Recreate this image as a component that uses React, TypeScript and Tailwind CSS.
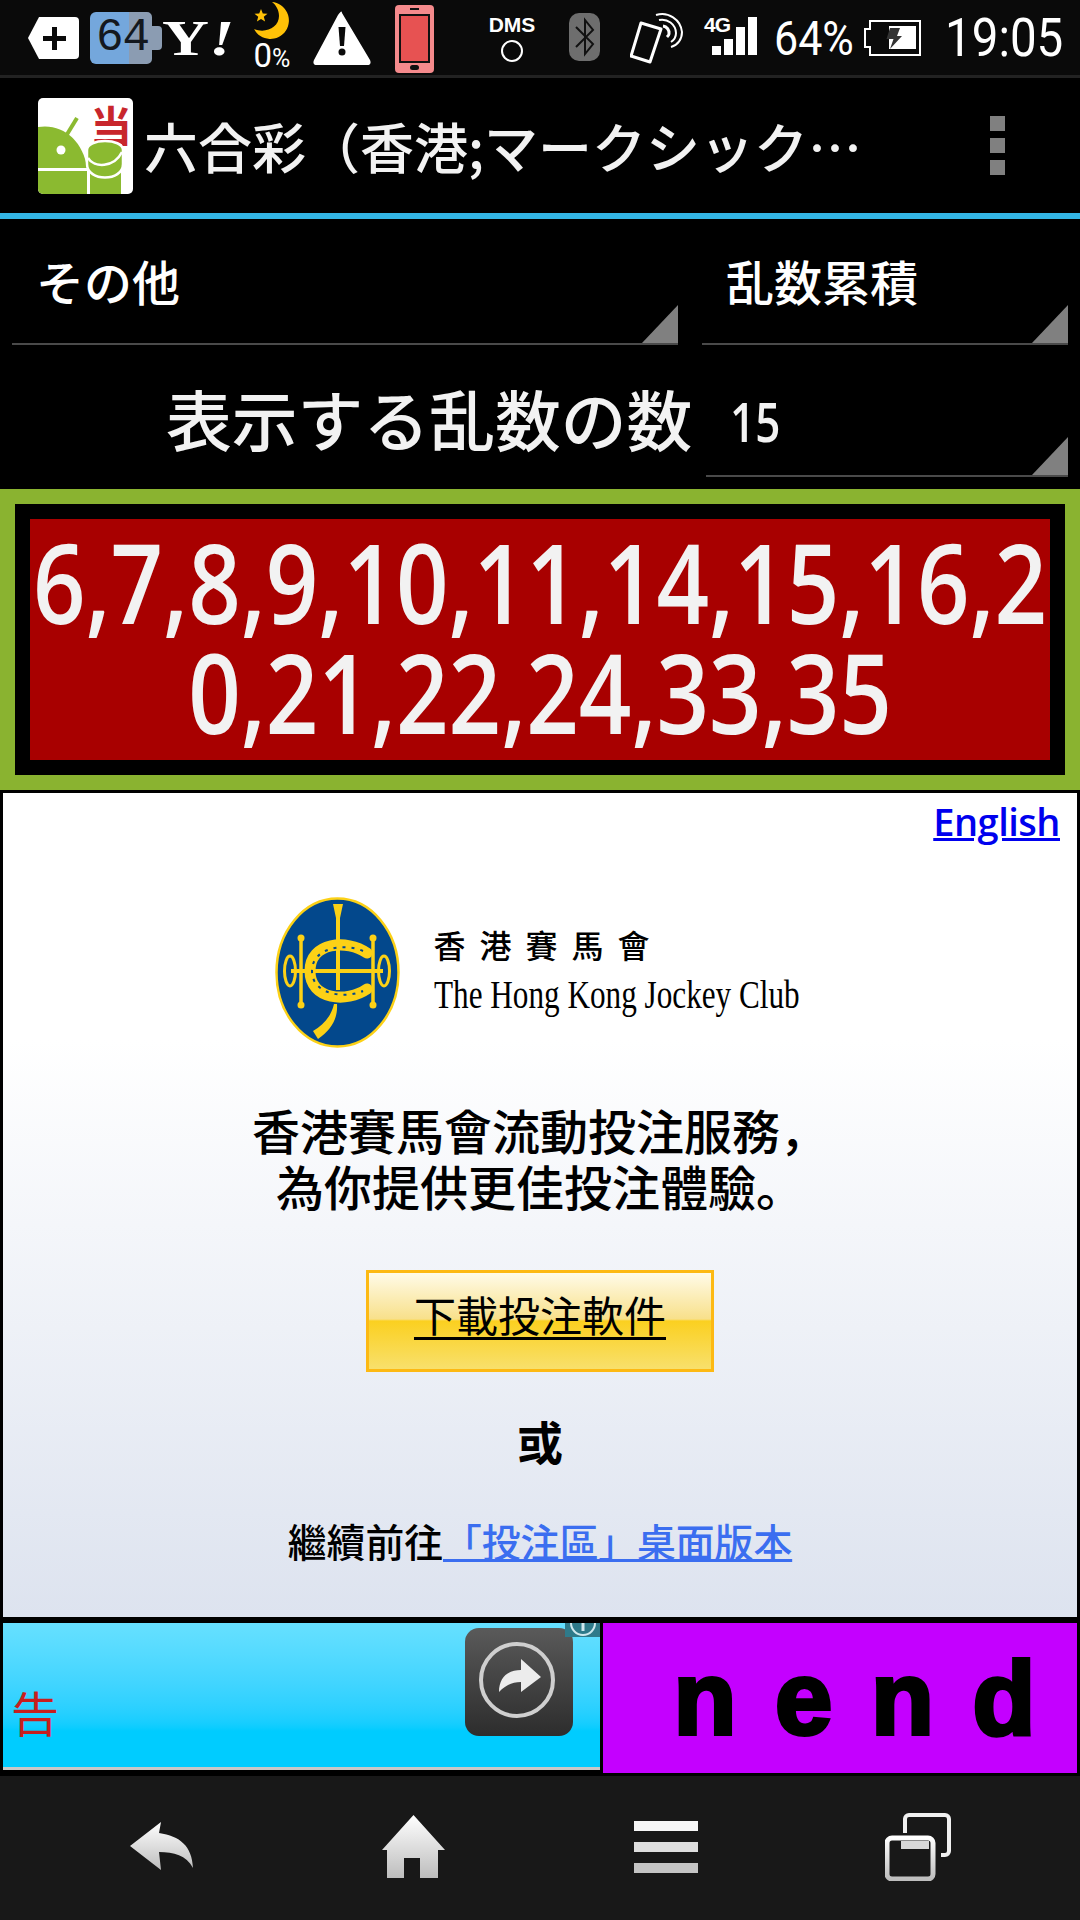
import { ReactNode } from "react";

const JP = "font-['Noto_Sans_CJK_JP','Noto_Sans_CJK_TC',sans-serif]";

//status bar icons
const TagIcon = () => (
  <svg width="51" height="42" viewBox="0 0 51 42" className="ml-[28px]">
    <path d="M11 0H47a4 4 0 0 1 4 4V38a4 4 0 0 1-4 4H11L0 21Z" fill="#fff" />
    <path d="M24 10h5v9h9v5h-9v9h-5v-9h-9v-5h9Z" fill="#0a0a0a" />
  </svg>
);

const BatteryWidget = () => (
  <div className="relative ml-[11px] h-[52px] w-[72px]">
    <svg width="72" height="52" viewBox="0 0 72 52">
      <path d="M6 0H39V52H6a6 6 0 0 1-6-6V6a6 6 0 0 1 6-6Z" fill="#74a7dc" />
      <path d="M39 0H57a5 5 0 0 1 5 5V14H68a4 4 0 0 1 4 4V34a4 4 0 0 1-4 4H62V47a5 5 0 0 1-5 5H39Z" fill="#8b9cb2" />
    </svg>
    <span className="absolute top-[-2px] left-[6px] font-['Liberation_Mono',monospace] text-[46px] leading-[56px] tracking-[-1px] text-[#14181e]">
      64
    </span>
  </div>
);

const Moon = () => (
  <div className="ml-[21px] flex h-[75px] w-[40px] flex-col items-center">
    <svg width="38" height="40" viewBox="0 0 36 38" className="mt-[2px]">
      <path d="M18 0a18.500 18.500 0 1 1-18 27c12 5 25-2 25-13 0-6-3-11-7-14Z" fill="#ffc107" />
      <path d="M7 7l1.800 4.500 4.700.3-3.700 3 1.300 4.700-4.100-2.600-4.100 2.600 1.300-4.700-3.700-3 4.700-.3Z" fill="#ffc107" />
    </svg>
    <span className="mt-[0px] font-['Roboto',sans-serif] text-[33px] leading-[32px] whitespace-nowrap text-white">
      0<span className="text-[25px]">%</span>
    </span>
  </div>
);

const Warning = () => (
  <svg width="60" height="56" viewBox="0 0 60 56" className="ml-[20px]">
    <path d="M30 3 L58 50 Q60 55 55 55 H5 Q0 55 2 50 L26 5 Q30 -1 30 3Z" fill="#fff" />
    <path d="M26.500 17h7l-1.500 19h-4Z" fill="#0a0a0a" />
    <circle cx="30" cy="42" r="3.500" fill="#0a0a0a" />
  </svg>
);

const PhoneRed = () => (
  <svg width="39" height="68" viewBox="0 0 39 68" className="ml-[23px] mt-[3px]">
    <rect width="39" height="68" rx="4" fill="#f58a8c" />
    <rect x="5" y="10" width="29" height="47" fill="#e75252" stroke="#111" strokeWidth="2" />
    <rect x="15" y="3" width="9" height="2" fill="#111" />
    <rect x="15" y="60" width="9" height="5" rx="2.500" fill="#111" />
  </svg>
);

const Dms = () => (
  <div className="ml-[54px] flex w-[48px] flex-col items-center">
    <span className="font-['Liberation_Sans',sans-serif] text-[21px] leading-[24px] font-bold text-white">DMS</span>
    <svg width="24" height="24" viewBox="0 0 24 24" className="mt-[2px]">
      <circle cx="12" cy="12" r="10" fill="none" stroke="#fff" strokeWidth="2" />
    </svg>
  </div>
);

const Bluetooth = () => (
  <svg width="31" height="48" viewBox="0 0 31 48" className="ml-[33px] mt-[-2px]">
    <rect width="31" height="48" rx="10" fill="#6e6e6e" />
    <path d="M7 14 L24 31 L16 41 V7 L24 17 L7 34" fill="none" stroke="#111" strokeWidth="2" />
  </svg>
);

const NfcPhone = () => (
  <svg width="53" height="52" viewBox="0 0 53 52" className="ml-[30px] mt-[1px]">
    <path d="M11 11 L31 17 L20 50 L1 44 Z" fill="none" stroke="#fff" strokeWidth="3" strokeLinejoin="round" />
    <path d="M26 3a20 20 0 0 1 26 17c0 7-4 13-11 15" fill="none" stroke="#fff" strokeWidth="2" />
    <path d="M29 8a14 14 0 0 1 17 13c0 4-2 7-5 9" fill="none" stroke="#fff" strokeWidth="2" />
    <path d="M33 14a7 7 0 0 1 6 8c0 1-1 2-2 3" fill="none" stroke="#fff" strokeWidth="3" />
  </svg>
);

const Signal = () => (
  <div className="relative ml-[21px] h-[44px] w-[53px]">
    <span className="absolute top-[-3px] left-0 font-['Liberation_Sans',sans-serif] text-[21px] leading-[24px] font-bold tracking-[-1px] text-white">
      4G
    </span>
    <svg width="53" height="44" viewBox="0 0 53 44">
      <rect x="8" y="30" width="9" height="9" fill="#fff" />
      <rect x="20" y="23" width="9" height="16" fill="#fff" />
      <rect x="32" y="11" width="9" height="28" fill="#fff" />
      <rect x="44" y="1" width="9" height="38" fill="#fff" />
    </svg>
  </div>
);

const ChargeBattery = () => (
  <svg width="57" height="36" viewBox="0 0 57 36" className="ml-[9px]">
    <path d="M6 1H56V35H6V27H1V9H6Z" fill="none" stroke="#fff" strokeWidth="2" />
    <path d="M25 6H52V29H25Z" fill="#fff" />
    <path d="M26 8H36L33 16H38L26 29L29.500 19H22.500Z" fill="#333" />
  </svg>
);

const StatusBar = () => (
  <div className="flex h-[75px] w-full items-center overflow-hidden bg-[#0a0a0a]">
    <TagIcon />
    <BatteryWidget />
    <div className="w-[69px] origin-left scale-x-[1.3] font-['Liberation_Serif',serif] text-[50px] leading-[50px] font-bold whitespace-nowrap text-white">
      Y<span className="italic">!</span>
    </div>
    <Moon />
    <Warning />
    <PhoneRed />
    <Dms />
    <Bluetooth />
    <NfcPhone />
    <Signal />
    <span className="ml-[17px] w-[81px] scale-y-[1.1] font-['Roboto',sans-serif] text-[43px] leading-[48px] whitespace-nowrap text-white">
      64%
    </span>
    <ChargeBattery />
    <span className="ml-[24px] w-[117px] scale-y-[1.12] font-['Roboto',sans-serif] text-[47.500px] leading-[50px] whitespace-nowrap text-white">
      19:05
    </span>
  </div>
);

//app icon with the red 当
const AppIcon = () => (
  <svg width="95" height="96" viewBox="0 0 95 96" className="ml-[38px] shrink-0 overflow-visible">
    <rect width="95" height="96" rx="5" fill="#fff" />
    <path d="M0 29C24 25 45 42 49 70H0Z" fill="#8bba30" />
    <path d="M28 38L39 20" stroke="#8bba30" strokeWidth="4" />
    <circle cx="23" cy="52" r="4.500" fill="#fff" />
    <path d="M0 73H49V96H5a5 5 0 0 1-5-5Z" fill="#8bba30" />
    <rect x="52" y="73" width="31" height="23" fill="#8bba30" />
    <text x="52" y="44" fontSize="42" fontWeight="700" fill="#c8262c" fontFamily="Noto Sans CJK JP">当</text>
    <path d="M49 52C49 40 85 40 85 52V66C85 84 49 84 49 66Z" fill="#8bba30" stroke="#fff" strokeWidth="2.500" />
    <path d="M50 60C56 70 76 70 84 54" fill="none" stroke="#fff" strokeWidth="2.500" />
  </svg>
);

const ActionBar = () => (
  <div className="flex h-[138px] w-full items-center border-t-[3px] border-[#222] bg-black">
    <AppIcon />
    <span className={`ml-[11px] w-[716px] text-[54px] leading-[64px] font-medium whitespace-nowrap text-[#f2f2f2] ${JP}`}>
      六合彩（香港;マークシック…
    </span>
    <div className="ml-[130px] flex w-[15px] flex-col gap-[7px]">
      <div className="h-[15px] bg-[#808080]" />
      <div className="h-[15px] bg-[#808080]" />
      <div className="h-[15px] bg-[#808080]" />
    </div>
  </div>
);

//spinner with the corner triangle
const Spinner = ({ className, children }: { className: string; children: ReactNode }) => (
  <div className={`relative border-b-[2px] border-[#4a4a4a] ${className}`}>
    {children}
    <svg width="36" height="38" viewBox="0 0 36 38" className="absolute right-0 bottom-0">
      <path d="M36 0V38H0Z" fill="#808080" />
    </svg>
  </div>
);

const Controls = () => (
  <div className="flex h-[270px] flex-col bg-black">
    <div className="flex h-[126px] pt-[6px] pl-[12px]">
      <Spinner className="h-[120px] w-[666px]">
        <div className={`pt-[25px] pl-[24px] text-[48px] leading-[60px] font-medium text-white ${JP}`}>その他</div>
      </Spinner>
      <Spinner className="ml-[24px] h-[120px] w-[366px]">
        <div className={`pt-[25px] pl-[24px] text-[48px] leading-[60px] font-medium text-white ${JP}`}>乱数累積</div>
      </Spinner>
    </div>
    <div className="flex h-[132px]">
      <div className={`mt-[28px] ml-[166px] w-[527px] text-[65.800px] leading-[90px] font-medium whitespace-nowrap text-[#f2f2f2] ${JP}`}>
        表示する乱数の数
      </div>
      <Spinner className="ml-[13px] h-[132px] w-[362px]">
        <div className="pt-[46px] pl-[24px] font-['Open_Sans',sans-serif] text-[44px] leading-[60px] font-semibold text-[#f2f2f2]">
          <span className="inline-block scale-y-[1.25]">15</span>
        </div>
      </Spinner>
    </div>
  </div>
);

const NumbersPanel = () => (
  <div className="h-[301px] bg-[#8ab330] p-[15px]">
    <div className="h-full bg-black p-[15px]">
      <div className="flex h-full items-center justify-center bg-[#a80000] pb-[6px]">
        <p className="w-full origin-center scale-y-[1.2] text-center font-['Open_Sans',sans-serif] text-[92px] leading-[92px] font-semibold break-all text-[#f2f2f2]">
          6,7,8,9,10,11,14,15,16,20,21,22,24,33,35
        </p>
      </div>
    </div>
  </div>
);

const JockeyLogo = () => (
  <svg width="125" height="151" viewBox="0 0 125 151" className="shrink-0">
    <ellipse cx="62.500" cy="75.500" rx="61" ry="74" fill="#03488c" stroke="#fcd116" strokeWidth="2.500" />
    <path d="M58 7H68L65 21V93H61V21Z" fill="#fcd116" />
    <path d="M16 74H108" stroke="#fcd116" strokeWidth="4" />
    <path d="M26 40V108M98 40V108" stroke="#fcd116" strokeWidth="3.500" />
    <circle cx="26" cy="41" r="3.500" fill="#fcd116" />
    <circle cx="26" cy="108" r="3.500" fill="#fcd116" />
    <circle cx="98" cy="41" r="3.500" fill="#fcd116" />
    <circle cx="98" cy="108" r="3.500" fill="#fcd116" />
    <ellipse cx="15" cy="74" rx="5.500" ry="15" fill="none" stroke="#fcd116" strokeWidth="3" />
    <ellipse cx="109" cy="74" rx="5.500" ry="15" fill="none" stroke="#fcd116" strokeWidth="3" />
    <path d="M92 56C72 42 35 45 35 74C35 103 72 106 92 92" fill="none" stroke="#fcd116" strokeWidth="11" strokeLinecap="round" />
    <path d="M88 54C70 46 37 50 37 74C37 98 70 102 88 94" fill="none" stroke="#03488c" strokeWidth="2" strokeDasharray="3 6" />
    <path d="M62 107C63 122 56 133 43 142L38 134C48 128 56 120 59 107Z" fill="#fcd116" />
  </svg>
);

const WebBanner = () => (
  <div className="flex h-[833px] flex-col border-x-[3px] border-t-[3px] border-b-[6px] border-black bg-linear-to-b from-white from-30% to-[#dde3ef]">
    <div className="pt-[6px] pr-[17px] text-right font-['Open_Sans',sans-serif] text-[38px] leading-[44px] font-semibold tracking-[-0.5px] text-[#0000ee] underline">
      English
    </div>
    <div className="mt-[54px] ml-[1px] flex h-[151px] justify-center">
      <JockeyLogo />
      <div className="ml-[34px] w-[373px] font-['Liberation_Serif','Noto_Sans_CJK_TC',serif] text-black">
        <div className="mt-[32px] text-[32px] leading-[36px] font-medium tracking-[14px]">香港賽馬會</div>
        <div className="mt-[7px] origin-left scale-x-[0.8] text-[39px] leading-[46px] whitespace-nowrap">
          The Hong Kong Jockey Club
        </div>
      </div>
    </div>
    <div className={`mt-[53px] text-center text-[48px] leading-[56px] font-medium text-black ${JP}`}>
      <div>香港賽馬會流動投注服務，</div>
      <div>為你提供更佳投注體驗。</div>
    </div>
    <div className="mt-[57px] flex justify-center">
      <div className="flex h-[102px] w-[348px] items-center justify-center border-[3px] border-[#fdb913] bg-[linear-gradient(180deg,#fffbe8_0%,#f8e08a_48%,#fbd020_50%,#f8e06c_100%)] pb-[14px]">
        <span className={`text-[42px] leading-[56px] text-black underline decoration-[3px] underline-offset-[5px] ${JP}`}>下載投注軟件</span>
      </div>
    </div>
    <div className={`mt-[40px] text-center text-[46px] leading-[56px] font-bold text-black ${JP}`}>或</div>
    <div className={`mt-[48px] text-center text-[38.800px] leading-[48px] font-medium text-black ${JP}`}>
      繼續前往<span className="font-medium text-[#3b6ef0] underline">「投注區」桌面版本</span>
    </div>
  </div>
);

const Ads = () => (
  <div className="flex h-[153px] bg-black px-[3px]">
    <div className="relative h-[147px] w-[597px] border-b-[3px] border-[#c8c8c8] bg-linear-to-b from-[#66e0ff] to-[#00ccff] to-75%">
      <span className={`absolute top-[58px] left-[8px] text-[48px] leading-[60px] text-[#c81e1e] ${JP}`}>告</span>
      <div className="absolute top-[5px] left-[462px] flex h-[108px] w-[108px] items-center justify-center rounded-[14px] bg-linear-to-b from-[#5a5a5a] to-[#2d2d2d]">
        <svg width="80" height="80" viewBox="0 0 80 80">
          <circle cx="38" cy="38" r="36" fill="none" stroke="#cfcfcf" strokeWidth="4" />
          <path d="M20 50C20 34 30 28 42 28V17L62 35L42 50V40C33 40 27 43 20 50Z" fill="#ececec" />
        </svg>
      </div>
      <div className="absolute top-0 right-0 flex h-[14px] w-[35px] justify-center overflow-hidden bg-[#2f7a8a]">
        <svg width="30" height="14" viewBox="0 0 30 14">
          <circle cx="15" cy="0" r="12" fill="none" stroke="#cfe8ee" strokeWidth="2" />
          <rect x="13.500" y="0" width="3" height="8" fill="#cfe8ee" />
        </svg>
      </div>
    </div>
    <div className="ml-[3px] flex h-[150px] w-[474px] items-center justify-center bg-[#c400ff]">
      <span className="mt-[2px] ml-[34px] font-['Liberation_Sans',sans-serif] text-[103px] leading-[120px] font-bold tracking-[5px] whitespace-pre text-black [-webkit-text-stroke:4px_black]">
        n e n d
      </span>
    </div>
  </div>
);

//bottom navigation
const NavGradient = ({ id }: { id: string }) => (
  <defs>
    <linearGradient id={id} x1="0" y1="0" x2="0" y2="1">
      <stop offset="0" stopColor="#ffffff" />
      <stop offset="1" stopColor="#bdbdbd" />
    </linearGradient>
  </defs>
);

const NavBar = () => (
  <div className="grid h-[144px] grid-cols-4 bg-[#181818] px-[36px]">
    <div className="flex items-center justify-center">
      <svg width="64" height="50" viewBox="0 0 64 50" className="mt-[-2px]">
        <NavGradient id="navBack" />
        <path d="M31 0L29 11C50 14 62 24 63 46C56 33 44 30 29 30L31 48L0 24Z" fill="url(#navBack)" />
      </svg>
    </div>
    <div className="flex items-center justify-center">
      <svg width="64" height="64" viewBox="0 0 64 64" className="mt-[-2px]">
        <NavGradient id="navHome" />
        <path d="M31.500 0L63 35H56V63H38V43H22V63H5V35H0Z" fill="url(#navHome)" />
      </svg>
    </div>
    <div className="flex items-center justify-center">
      <svg width="64" height="52" viewBox="0 0 64 52" className="mt-[-2px]">
        <rect y="0" width="64" height="10" fill="#f6f6f6" />
        <rect y="21" width="64" height="10" fill="#dedede" />
        <rect y="42" width="64" height="10" fill="#c4c4c4" />
      </svg>
    </div>
    <div className="flex items-center justify-center">
      <svg width="66" height="68" viewBox="0 0 66 68" className="mt-[-2px]">
        <NavGradient id="navRecent" />
        <path d="M20 20V6a4 4 0 0 1 4-4H60a4 4 0 0 1 4 4V38a4 4 0 0 1-4 4H56" fill="none" stroke="#f0f0f0" strokeWidth="4" />
        <rect x="2" y="25" width="46" height="41" rx="5" fill="none" stroke="url(#navRecent)" strokeWidth="5" />
        <rect x="16" y="28" width="28" height="8" fill="#d8d8d8" />
      </svg>
    </div>
  </div>
);

export default function App(): ReactNode {
  return (
    <div className="flex h-[1920px] w-[1080px] flex-col overflow-hidden bg-black">
      <StatusBar />
      <ActionBar />
      <div className="h-[6px] bg-[#33b5e5]" />
      <Controls />
      <NumbersPanel />
      <WebBanner />
      <Ads />
      <NavBar />
    </div>
  );
}
